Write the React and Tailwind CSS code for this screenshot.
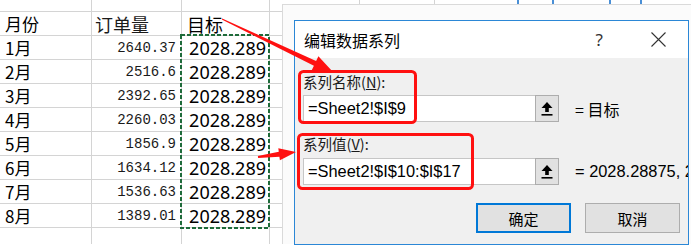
import React from "react";

const months = ["1月", "2月", "3月", "4月", "5月", "6月", "7月", "8月"];
const orders = ["2640.37", "2516.6", "2392.65", "2260.03", "1856.9", "1634.12", "1536.63", "1389.01"];

const cell = "shrink-0 border-r border-b border-[#d4d4d4] flex items-center overflow-hidden whitespace-nowrap";
const cjk = { fontFamily: '"Noto Sans CJK SC", "Noto Sans", sans-serif' };

function Row({ h = "h-[24px]", a, b, c, header }) {
  return (
    <div className={`flex ${h}`}>
      <div className={`${cell} w-[92px] pl-[5px] text-[17px] leading-none text-black font-['Noto_Sans_CJK_SC',sans-serif]`}>{a}</div>
      <div
        className={`${cell} w-[90px] ${header ? "pl-[3px] text-[18px] font-['Noto_Sans_CJK_SC',sans-serif]" : "justify-end pr-[5px] text-[14px] font-['Liberation_Mono',monospace]"} leading-none text-[#1a1a1a]`}
      >
        {b}
      </div>
      <div
        className={`${cell} w-[88px] ${header ? "pl-[5px] text-[18px] font-['Noto_Sans_CJK_SC',sans-serif]" : "justify-end pr-[3px] text-[18px] font-['Noto_Sans',sans-serif]"} leading-none text-black`}
      >
        {c}
      </div>
      <div className={`${cell} w-[90px]`} />
      <div className={`${cell} w-[75px]`} />
      <div className={`${cell} w-[300px]`} />
    </div>
  );
}

function UploadBtn() {
  return (
    <div className="shrink-0 w-[24px] h-[27px] bg-[#e1e1e1] border border-[#adadad] flex items-center justify-center">
      <svg width="14" height="16" viewBox="0 0 14 16">
        <polygon points="7,1 1.5,7 12.5,7" fill="#000" />
        <rect x="5.2" y="6.5" width="3.6" height="4.5" fill="#000" />
        <rect x="1.5" y="13" width="11" height="1.6" fill="#000" />
      </svg>
    </div>
  );
}

export default function App() {
  return (
    <div className="relative w-[691px] h-[252px] bg-white overflow-hidden">
      {/* spreadsheet */}
      <div className="h-[244px] overflow-hidden">
        <Row h="h-[12px]" />
        <Row a="月份" b="订单量" c="目标" header />
        {months.map((m, i) => (
          <Row key={m} a={m} b={orders[i]} c="2028.289" />
        ))}
        <Row />
      </div>

      {/* window shadow frame */}
      <div className="absolute left-[282px] top-[4px] w-[420px] h-[240px] bg-[#fbfbfb] border-l border-t border-[#dadada]" />

      {/* dialog */}
      <div className="absolute left-[294px] top-[20px] w-[395px] h-[225px] border border-[#2b87d6] flex flex-col overflow-hidden" style={cjk}>
        <div className="h-[37px] bg-white flex items-center pl-[9px]">
          <span className="text-[16px] leading-none text-black">编辑数据系列</span>
          <div className="ml-auto flex items-center pr-[22px]">
            <span className="text-[17px] leading-none text-[#333] font-['Noto_Sans',sans-serif]">?</span>
            <svg className="ml-[48px]" width="15" height="15" viewBox="0 0 15 15">
              <path d="M0.5 0.5 L14.5 14.5 M14.5 0.5 L0.5 14.5" stroke="#333" strokeWidth="1.1" />
            </svg>
          </div>
        </div>
        <div className="flex-1 bg-[#f0f0f0] pl-[8px] flex flex-col">
          <div className="mt-[14px] h-[20px] flex items-center text-[14.5px] text-[#1a1a1a] leading-none">
            系列名称(<span className="underline">N</span>):
          </div>
          <div className="mt-[3px] flex items-center">
            <div className="shrink-0 w-[232px] h-[27px] bg-white border border-[#c6c6c6] border-r-0 flex items-center pl-[4px] text-[16.4px] leading-none text-black font-['Liberation_Sans',sans-serif] whitespace-nowrap overflow-hidden">
              =Sheet2!$I$9
            </div>
            <UploadBtn />
            <span className="ml-[16px] text-[16px] leading-none text-black whitespace-nowrap">= 目标</span>
          </div>
          <div className="mt-[12px] h-[20px] flex items-center text-[14.5px] text-[#1a1a1a] leading-none">
            系列值(<span className="underline">V</span>):
          </div>
          <div className="mt-[4px] flex items-center">
            <div className="shrink-0 w-[232px] h-[27px] bg-white border border-[#c6c6c6] border-r-0 flex items-center pl-[4px] text-[16.4px] leading-none text-black font-['Liberation_Sans',sans-serif] whitespace-nowrap overflow-hidden">
              =Sheet2!$I$10:$I$17
            </div>
            <UploadBtn />
            <span className="ml-[16px] text-[16.4px] leading-none text-black whitespace-nowrap font-['Liberation_Sans',sans-serif]">= 2028.28875, 2028.28875</span>
          </div>
          <div className="mt-[18px] flex justify-end gap-[14px] pr-[8px]">
            <div className="w-[95px] h-[30px] bg-[#e1e1e1] border-2 border-[#0078d7] flex items-center justify-center text-[15px] leading-none text-black">确定</div>
            <div className="w-[95px] h-[30px] bg-[#e1e1e1] border border-[#adadad] flex items-center justify-center text-[15px] leading-none text-black">取消</div>
          </div>
        </div>
      </div>

      {/* annotations overlay */}
      <svg className="absolute left-0 top-0 pointer-events-none" width="691" height="252" viewBox="0 0 691 252">
        <line x1="518" y1="0" x2="518" y2="4" stroke="#4a8fd6" strokeWidth="2" />
        <line x1="553" y1="0" x2="553" y2="4" stroke="#4a8fd6" strokeWidth="2" />
        <line x1="610" y1="0" x2="610" y2="4" stroke="#4a8fd6" strokeWidth="2" />
        <line x1="641" y1="0" x2="641" y2="4" stroke="#4a8fd6" strokeWidth="2" />
        <rect x="181" y="35" width="88" height="193" fill="none" stroke="#1e6b3a" strokeWidth="2" strokeDasharray="4 2" />
        <rect x="299.5" y="71.5" width="116" height="51" rx="4" fill="none" stroke="#ff1010" strokeWidth="3" />
        <rect x="298.5" y="134.5" width="174" height="54" rx="4" fill="none" stroke="#ff1010" strokeWidth="3" />
        <polygon
          points="222.2,18.55 316.1,61.1 318.4,56.2 333,72 311.6,70.6 313.9,65.7 221.8,19.45"
          fill="#ff1010"
        />
        <polygon
          points="257.87,156.01 278.8,151.7 278.3,148.2 296,152 279.9,160.2 279.4,156.7 258.13,157.99"
          fill="#ff1010"
        />
      </svg>
    </div>
  );
}
